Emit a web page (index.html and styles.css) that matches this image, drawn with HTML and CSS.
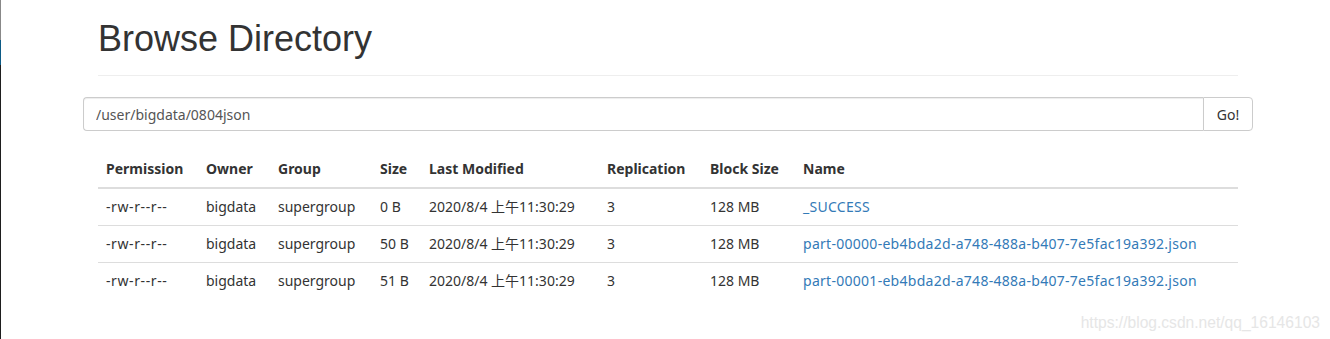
FILE: index.html
```html
<!DOCTYPE html>
<html lang="en">
<head>
    <meta charset="UTF-8">
    <meta name="viewport" content="width=device-width, initial-scale=1.0">
    <title>Browsing HDFS</title>
    <link rel="stylesheet" href="styles.css">
</head>
<body>
    <div class="container">
        <div class="page-header">
            <h1>Browse Directory</h1>
        </div>
        <div class="input-group">
            <input type="text" class="form-control" id="directory" value="/user/bigdata/0804json">
            <button class="btn" id="btn-nav-directory">Go!</button>
        </div>
        <table class="table">
            <colgroup>
                <col style="width: 100px">
                <col style="width: 72px">
                <col style="width: 102px">
                <col style="width: 49px">
                <col style="width: 178px">
                <col style="width: 103px">
                <col style="width: 93px">
                <col>
            </colgroup>
            <thead>
                <tr>
                    <th>Permission</th>
                    <th>Owner</th>
                    <th>Group</th>
                    <th>Size</th>
                    <th>Last Modified</th>
                    <th>Replication</th>
                    <th>Block Size</th>
                    <th>Name</th>
                </tr>
            </thead>
            <tbody>
                <tr>
                    <td class="perm">-rw-r--r--</td>
                    <td>bigdata</td>
                    <td>supergroup</td>
                    <td>0 B</td>
                    <td>2020/8/4 上午11:30:29</td>
                    <td>3</td>
                    <td>128 MB</td>
                    <td><a href="#">_SUCCESS</a></td>
                </tr>
                <tr>
                    <td class="perm">-rw-r--r--</td>
                    <td>bigdata</td>
                    <td>supergroup</td>
                    <td>50 B</td>
                    <td>2020/8/4 上午11:30:29</td>
                    <td>3</td>
                    <td>128 MB</td>
                    <td><a href="#">part-00000-eb4bda2d-a748-488a-b407-7e5fac19a392.json</a></td>
                </tr>
                <tr>
                    <td class="perm">-rw-r--r--</td>
                    <td>bigdata</td>
                    <td>supergroup</td>
                    <td>51 B</td>
                    <td>2020/8/4 上午11:30:29</td>
                    <td>3</td>
                    <td>128 MB</td>
                    <td><a href="#">part-00001-eb4bda2d-a748-488a-b407-7e5fac19a392.json</a></td>
                </tr>
            </tbody>
        </table>
    </div>
    <div class="watermark">https://blog.csdn.net/qq_16146103</div>
</body>
</html>
```

FILE: styles.css
```css
html {
    background: #fff;
}
html::before {
    content: "";
    position: fixed;
    top: 0;
    left: 0;
    width: 1px;
    height: 100%;
    background: linear-gradient(#888 0, #888 40px, #0c5a85 40px, #0c5a85 65px, #1e1e1e 65px);
}
body {
    margin: 0;
    padding-left: 6px;
    font-family: "Noto Sans", "Noto Sans CJK SC", sans-serif;
    font-size: 14px;
    line-height: 20px;
    color: #333;
}
.container {
    width: 1140px;
    margin: 0 auto;
    padding: 0 15px;
}
.page-header {
    margin: 19px 0 21px;
    padding-bottom: 16px;
    border-bottom: 1px solid #eee;
}
h1 {
    margin: 0;
    font-family: "Liberation Sans", Arial, sans-serif;
    font-size: 36px;
    font-weight: 500;
    line-height: 40px;
}
.input-group {
    display: flex;
    margin: 0 -15px 20px;
}
.form-control {
    flex: 1;
    height: 34px;
    box-sizing: border-box;
    padding: 6px 12px;
    border: 1px solid #ccc;
    border-right: none;
    border-radius: 4px 0 0 4px;
    box-shadow: inset 0 1px 1px rgba(0, 0, 0, 0.075);
    font-family: inherit;
    font-size: 14px;
    color: #555;
}
.btn {
    width: 50px;
    height: 34px;
    padding: 0;
    border: 1px solid #ccc;
    border-radius: 0 4px 4px 0;
    background: #fff;
    font-family: inherit;
    font-size: 14px;
    color: #333;
}
.table {
    width: 100%;
    border-collapse: collapse;
    table-layout: fixed;
}
.table th, .table td {
    padding: 8px;
    text-align: left;
    white-space: nowrap;
}
.table th {
    font-weight: bold;
    border-bottom: 2px solid #ddd;
}
.table td {
    border-top: 1px solid #ddd;
}
.table tbody tr:first-child td {
    border-top: none;
}
.table td.perm {
    letter-spacing: 0.6px;
}
.table a {
    color: #337ab7;
    text-decoration: none;
    letter-spacing: 0.28px;
}
.watermark {
    position: absolute;
    right: 10px;
    bottom: 6px;
    font-family: "Liberation Sans", Arial, sans-serif;
    font-size: 15.6px;
    color: #e6e6e6;
}
```
